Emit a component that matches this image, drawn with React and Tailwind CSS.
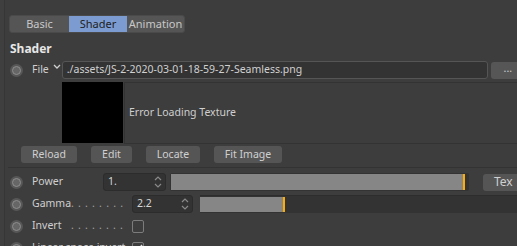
import React from "react";

const font = { fontFamily: '"Noto Sans", "Open Sans", sans-serif' };

function Radio() {
  return (
    <div className="w-[13px] h-[13px] rounded-full bg-[#575757] flex items-center justify-center shrink-0">
      <div className="w-[9px] h-[9px] rounded-full border-[1.5px] border-[#8e8e8e] bg-[#666]" />
    </div>
  );
}

function Spinner() {
  return (
    <svg width="8" height="14" viewBox="0 0 8 14" className="shrink-0">
      <path d="M1 5 L4 2 L7 5" fill="none" stroke="#8a8a8a" strokeWidth="1.2" />
      <path d="M1 9 L4 12 L7 9" fill="none" stroke="#8a8a8a" strokeWidth="1.2" />
    </svg>
  );
}

function NumInput({ value, w }) {
  return (
    <div className={`h-[18px] ${w} shrink-0 bg-[#333] border border-[#2c2c2c] rounded-[3px] flex items-center pl-[4px] pr-[3px] text-[#d6d6d6]`}>
      <span className="flex-1">{value}</span>
      <Spinner />
    </div>
  );
}

function DotLabel({ label, dots }) {
  return (
    <div className="ml-[9px] w-[95px] shrink-0 flex items-center whitespace-nowrap">
      <span>{label}</span>
      <span className="flex-1 text-right tracking-[4.2px] text-[#a0a0a0]">{dots}</span>
    </div>
  );
}

export default function App() {
  return (
    <div className="w-[517px] h-[246px] bg-[#3d3d3d] flex overflow-hidden text-[10.5px] text-[#cfcfcf]" style={font}>
      <div className="w-[5px] h-full bg-[#3f3f3f] border-r border-[#363636] shrink-0" />
      <div className="flex-1 flex flex-col pl-[4px] min-w-0 h-[246px] overflow-hidden">
        {/* Tabs */}
        <div className="mt-[15px] shrink-0 flex h-[18px] w-[176px] rounded-[3px] overflow-hidden bg-[#555] border border-[#4a4a4a]">
          <div className="w-[59px] flex items-center justify-center text-[#c8c8c8] text-[11px]">Basic</div>
          <div className="w-[58px] flex items-center justify-center bg-[#7c9cd1] text-[#1e1e1e] text-[11px]">Shader</div>
          <div className="flex-1 flex items-center justify-center text-[#c8c8c8] text-[11px]">Animation</div>
        </div>
        {/* Heading */}
        <div className="mt-[9px] shrink-0 h-[14px] flex items-center pl-[1px] font-bold text-[12px] text-[#e6e6e6]">Shader</div>
        {/* File row */}
        <div className="mt-[5px] shrink-0 h-[18px] flex items-center">
          <div className="ml-[1px]"><Radio /></div>
          <span className="ml-[9px]">File</span>
          <svg width="8" height="6" viewBox="0 0 8 6" className="ml-[4px] mb-[6px] shrink-0">
            <path d="M1 1 L4 4 L7 1" fill="none" stroke="#d0d0d0" strokeWidth="1.3" />
          </svg>
          <div className="ml-[1px] w-[426px] h-[18px] shrink-0 bg-[#333] border border-[#555] rounded-[3px] flex items-center pl-[4px] text-[#d0d0d0] whitespace-nowrap overflow-hidden">
            ./assets/JS-2-2020-03-01-18-59-27-Seamless.png
          </div>
          <div className="ml-[3px] w-[34px] h-[17px] shrink-0 bg-[#565656] rounded-[3px] flex items-center justify-center text-[#cfcfcf] leading-none pb-[4px]">...</div>
        </div>
        {/* Texture */}
        <div className="mt-[3px] shrink-0 h-[62px] flex pl-[53px]">
          <div className="w-[61px] h-[61px] bg-black shrink-0" />
          <div className="flex-1 ml-[1px] border-t border-b border-l border-[#333] flex items-center pl-[4px]">
            Error Loading Texture
          </div>
        </div>
        {/* Buttons */}
        <div className="mt-[2px] shrink-0 h-[17px] flex pl-[12px] gap-[14px]">
          <div className="w-[56px] bg-[#555] rounded-[3px] flex items-center justify-center text-[#d0d0d0]">Reload</div>
          <div className="w-[41px] bg-[#555] rounded-[3px] flex items-center justify-center text-[#d0d0d0]">Edit</div>
          <div className="w-[54px] bg-[#555] rounded-[3px] flex items-center justify-center text-[#d0d0d0]">Locate</div>
          <div className="w-[68px] bg-[#555] rounded-[3px] flex items-center justify-center text-[#d0d0d0]">Fit Image</div>
        </div>
        {/* Separator */}
        <div className="mt-[4px] shrink-0 h-[1px] bg-[#333] ml-[-1px]" />
        {/* Power */}
        <div className="mt-[5px] shrink-0 h-[18px] flex items-center">
          <div className="ml-[1px]"><Radio /></div>
          <span className="ml-[9px] w-[71px] shrink-0">Power</span>
          <NumInput value="1." w="w-[63px]" />
          <div className="ml-[4px] w-[299px] shrink-0 h-[18px] bg-[#333] rounded-[2px] flex items-stretch p-[1px] pr-[3px]">
            <div className="w-[294px] bg-[#868686] border-r-[2px] border-[#ffae00]" />
          </div>
          <div className="ml-[14px] w-[40px] h-[17px] shrink-0 bg-[#555] rounded-[3px] flex items-center pl-[11px] text-[#d0d0d0] text-[12px]">Tex</div>
        </div>
        {/* Gamma */}
        <div className="mt-[4px] shrink-0 h-[18px] flex items-center">
          <div className="ml-[1px]"><Radio /></div>
          <DotLabel label="Gamma" dots="........" />
          <div className="ml-[5px]">
            <NumInput value="2.2" w="w-[61px]" />
          </div>
          <div className="ml-[7px] flex-1 h-[18px] bg-[#333] border-t border-[#2d2d2d] flex items-stretch py-[1px]">
            <div className="w-[85px] bg-[#868686] border-r-[2px] border-[#ffae00]" />
          </div>
        </div>
        {/* Invert */}
        <div className="mt-[4px] shrink-0 h-[18px] flex items-center">
          <div className="ml-[1px]"><Radio /></div>
          <DotLabel label="Invert" dots="........" />
          <div className="ml-[5px] w-[12px] h-[13px] border border-[#7c7c7c] rounded-[2px]" />
        </div>
        {/* Linear space invert */}
        <div className="mt-[4px] shrink-0 h-[18px] flex items-center">
          <div className="ml-[1px]"><Radio /></div>
          <div className="ml-[9px] w-[95px] shrink-0 whitespace-nowrap overflow-hidden">Linear space invert</div>
          <div className="ml-[5px] w-[12px] h-[13px] border border-[#7c7c7c] rounded-[2px] flex items-center justify-center">
            <svg width="9" height="8" viewBox="0 0 9 8"><path d="M1 4 L3.5 6.5 L8 1" fill="none" stroke="#e0e0e0" strokeWidth="1.5" /></svg>
          </div>
        </div>
      </div>
    </div>
  );
}
